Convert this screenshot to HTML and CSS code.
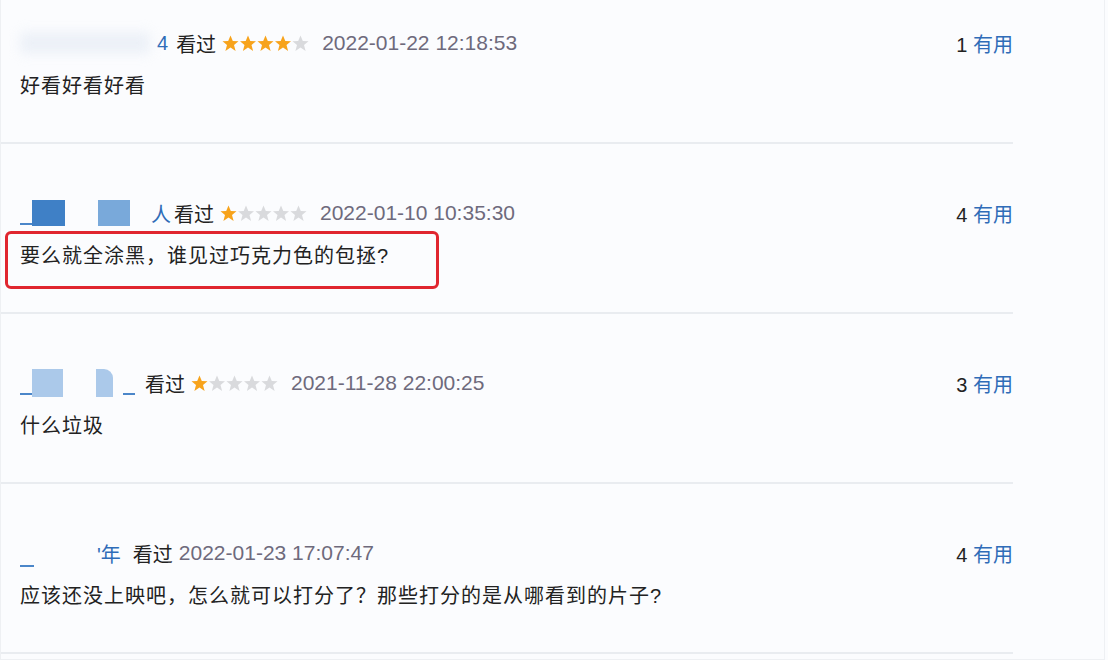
FILE: index.html
```html
<!DOCTYPE html>
<html lang="zh-CN">
<head>
  <meta charset="UTF-8">
  <title>短评</title>
  <link rel="stylesheet" href="styles.css">
</head>
<body>
  <div class="page">
    <div class="comment-list">

      <div class="comment first">
        <div class="comment-info">
          <span class="user">
            <span class="mosaic m-fade" style="width: 130px"></span>
            <span class="user-tail">4</span>
          </span>
          <span class="seen">看过</span>
          <svg class="stars" width="88" height="17" viewBox="0 0 88 17">
            <polygon class="on" points="8.5,0.5 10.8,6 16.5,6.3 12,10 13.6,16 8.5,12.6 3.4,16 5,10 0.5,6.3 6.2,6"/>
            <polygon class="on" transform="translate(17.5 0)" points="8.5,0.5 10.8,6 16.5,6.3 12,10 13.6,16 8.5,12.6 3.4,16 5,10 0.5,6.3 6.2,6"/>
            <polygon class="on" transform="translate(35 0)" points="8.5,0.5 10.8,6 16.5,6.3 12,10 13.6,16 8.5,12.6 3.4,16 5,10 0.5,6.3 6.2,6"/>
            <polygon class="on" transform="translate(52.5 0)" points="8.5,0.5 10.8,6 16.5,6.3 12,10 13.6,16 8.5,12.6 3.4,16 5,10 0.5,6.3 6.2,6"/>
            <polygon class="off" transform="translate(70 0)" points="8.5,0.5 10.8,6 16.5,6.3 12,10 13.6,16 8.5,12.6 3.4,16 5,10 0.5,6.3 6.2,6"/>
          </svg>
          <span class="time">2022-01-22 12:18:53</span>
          <span class="votes"><span class="count">1</span> <a class="useful">有用</a></span>
        </div>
        <p class="comment-text">好看好看好看</p>
      </div>

      <div class="comment">
        <div class="comment-info">
          <span class="user">
            <span class="dash"></span>
            <span class="mosaic m-dark" style="width: 33px"></span>
            <span class="gap" style="width: 33px"></span>
            <span class="mosaic m-light" style="width: 32px"></span>
            <span class="user-tail wide">人</span>
          </span>
          <span class="seen">看过</span>
          <svg class="stars" width="88" height="17" viewBox="0 0 88 17">
            <polygon class="on" points="8.5,0.5 10.8,6 16.5,6.3 12,10 13.6,16 8.5,12.6 3.4,16 5,10 0.5,6.3 6.2,6"/>
            <polygon class="off" transform="translate(17.5 0)" points="8.5,0.5 10.8,6 16.5,6.3 12,10 13.6,16 8.5,12.6 3.4,16 5,10 0.5,6.3 6.2,6"/>
            <polygon class="off" transform="translate(35 0)" points="8.5,0.5 10.8,6 16.5,6.3 12,10 13.6,16 8.5,12.6 3.4,16 5,10 0.5,6.3 6.2,6"/>
            <polygon class="off" transform="translate(52.5 0)" points="8.5,0.5 10.8,6 16.5,6.3 12,10 13.6,16 8.5,12.6 3.4,16 5,10 0.5,6.3 6.2,6"/>
            <polygon class="off" transform="translate(70 0)" points="8.5,0.5 10.8,6 16.5,6.3 12,10 13.6,16 8.5,12.6 3.4,16 5,10 0.5,6.3 6.2,6"/>
          </svg>
          <span class="time">2022-01-10 10:35:30</span>
          <span class="votes"><span class="count">4</span> <a class="useful">有用</a></span>
        </div>
        <p class="comment-text"><span class="highlight">要么就全涂黑，谁见过巧克力色的包拯?</span></p>
      </div>

      <div class="comment">
        <div class="comment-info">
          <span class="user short">
            <span class="dash"></span>
            <span class="mosaic m-pale" style="width: 31px"></span>
            <span class="gap" style="width: 33px"></span>
            <span class="mosaic m-pale cut" style="width: 17px"></span>
            <span class="dash"></span>
          </span>
          <span class="seen">看过</span>
          <svg class="stars" width="88" height="17" viewBox="0 0 88 17">
            <polygon class="on" points="8.5,0.5 10.8,6 16.5,6.3 12,10 13.6,16 8.5,12.6 3.4,16 5,10 0.5,6.3 6.2,6"/>
            <polygon class="off" transform="translate(17.5 0)" points="8.5,0.5 10.8,6 16.5,6.3 12,10 13.6,16 8.5,12.6 3.4,16 5,10 0.5,6.3 6.2,6"/>
            <polygon class="off" transform="translate(35 0)" points="8.5,0.5 10.8,6 16.5,6.3 12,10 13.6,16 8.5,12.6 3.4,16 5,10 0.5,6.3 6.2,6"/>
            <polygon class="off" transform="translate(52.5 0)" points="8.5,0.5 10.8,6 16.5,6.3 12,10 13.6,16 8.5,12.6 3.4,16 5,10 0.5,6.3 6.2,6"/>
            <polygon class="off" transform="translate(70 0)" points="8.5,0.5 10.8,6 16.5,6.3 12,10 13.6,16 8.5,12.6 3.4,16 5,10 0.5,6.3 6.2,6"/>
          </svg>
          <span class="time">2021-11-28 22:00:25</span>
          <span class="votes"><span class="count">3</span> <a class="useful">有用</a></span>
        </div>
        <p class="comment-text">什么垃圾</p>
      </div>

      <div class="comment">
        <div class="comment-info">
          <span class="user">
            <span class="dash low"></span>
            <span class="gap" style="width: 56px"></span>
            <span class="user-tail year">'年</span>
          </span>
          <span class="seen">看过</span>
          <span class="time">2022-01-23 17:07:47</span>
          <span class="votes"><span class="count">4</span> <a class="useful">有用</a></span>
        </div>
        <p class="comment-text">应该还没上映吧，怎么就可以打分了？那些打分的是从哪看到的片子?</p>
      </div>

    </div>
  </div>
</body>
</html>
```

FILE: styles.css
```css
* {
  box-sizing: border-box;
}

body {
  margin: 0;
  background: #fbfcfe;
  font-family: "Liberation Sans", "Noto Sans CJK SC", sans-serif;
  color: #222;
}

.page {
  width: 1105px;
  height: 660px;
  border: 1px solid #eef0f3;
  border-top: none;
  overflow: hidden;
}

.comment-list {
  width: 1012px;
}

.comment {
  height: 170px;
  padding: 55px 0 0 19px;
  border-bottom: 2px solid #e9ecf0;
}

.comment.first {
  height: 144px;
  padding-top: 29px;
}

.comment-info {
  display: flex;
  align-items: center;
  height: 28px;
  font-size: 20px;
}

.user {
  display: flex;
  align-items: center;
  margin-right: 8px;
  color: #3a78c2;
  height: 28px;
}

.user.short {
  margin-right: 10px;
}

.user-tail {
  color: #2f6cb8;
  margin-left: 7px;
}

.user-tail.wide {
  margin-left: 21px;
  margin-right: -5px;
}

.user-tail.year {
  margin-right: 4px;
}

.mosaic {
  display: inline-block;
  height: 26px;
}

.m-fade {
  height: 22px;
  background: #e9eef6;
  filter: blur(6px);
  opacity: 0.8;
}

.m-dark {
  background: #3f80c6;
}

.m-light {
  background: #79a9da;
}

.m-pale {
  height: 28px;
  background: #9cc0e6;
  opacity: 0.85;
}

.m-pale.cut {
  border-top-right-radius: 9px;
}

.gap {
  display: inline-block;
}

.dash {
  display: inline-block;
  width: 12px;
  height: 2px;
  margin-top: 22px;
  background: #4b86c9;
}

.dash.low {
  width: 14px;
  margin-top: 26px;
}

.user.short .dash:last-child {
  margin-left: 10px;
}

.seen {
  color: #222;
  margin-right: 6px;
}

.stars {
  margin-right: 12px;
}

.stars .on {
  fill: #f7a31c;
}

.stars .off {
  fill: #d9dadd;
}

.time {
  color: #6e6a7c;
  font-size: 21px;
}

.votes {
  margin-left: auto;
  color: #222;
}

.useful {
  color: #2f6cb8;
  cursor: pointer;
}

.comment-text {
  margin: 14px 0 0;
  font-size: 20px;
  line-height: 30px;
  letter-spacing: 1px;
  color: #222;
}

.highlight {
  position: relative;
}

.highlight::after {
  content: "";
  position: absolute;
  left: -15px;
  right: -50px;
  top: -14px;
  bottom: -22px;
  border: 3px solid #e0262f;
  border-radius: 6px;
}
```
